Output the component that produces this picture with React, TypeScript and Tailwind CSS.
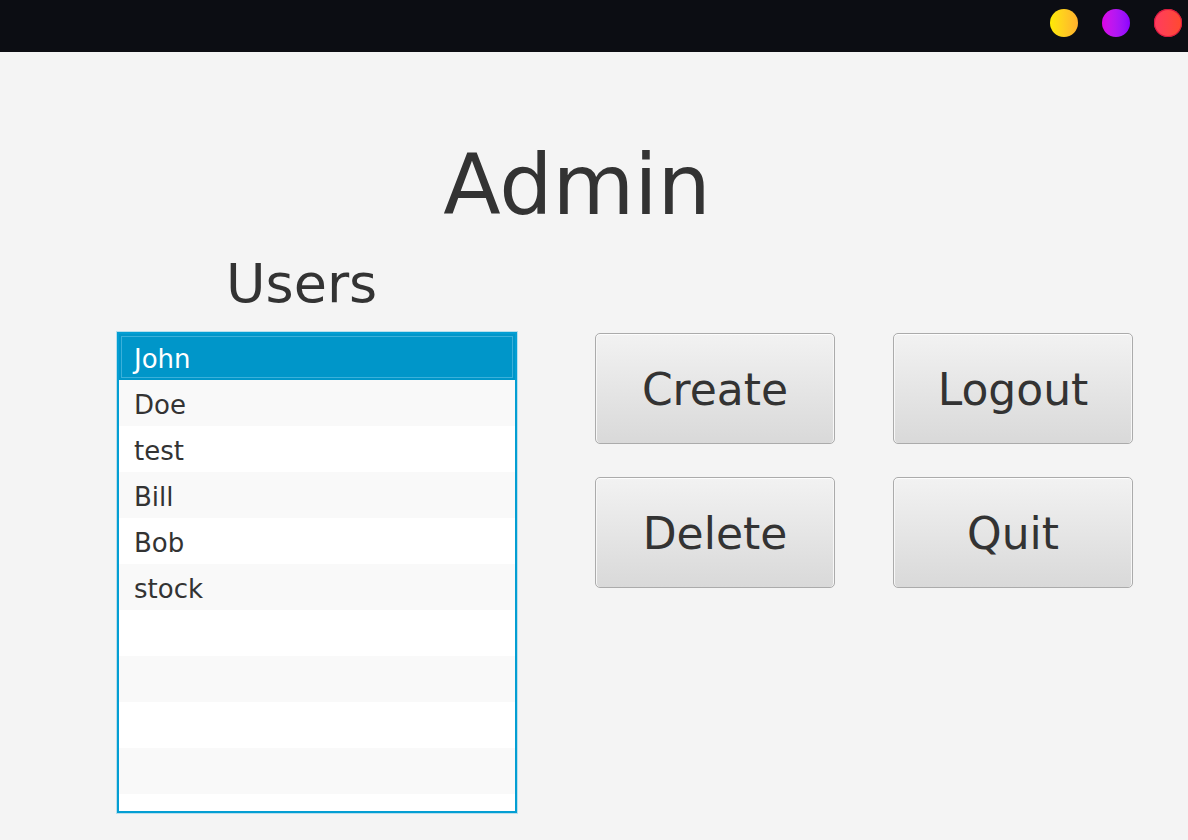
const users = ["John", "Doe", "test", "Bill", "Bob", "stock", "", "", "", ""];

function Dot({ className }: { className: string }) {
  return <span className={`block w-[28px] h-[28px] rounded-full ${className}`} />;
}

function ActionButton({ label }: { label: string }) {
  return (
    <button className="w-[240px] h-[111px] pt-[3px] rounded-[5px] border border-[#ababab] bg-linear-to-b from-[#f2f2f2] to-[#d9d9d9] shadow-[inset_0_1px_0_#fdfdfd,inset_1px_0_0_#f7f7f7,inset_-1px_0_0_#f7f7f7] text-[44px] leading-none text-[#333333] flex items-center justify-center">
      {label}
    </button>
  );
}

export default function App() {
  return (
    <div
      className="w-[1188px] h-[840px] bg-[#f4f4f4] flex flex-col text-[#333333]"
      style={{ fontFamily: '"DejaVu Sans", "Liberation Sans", sans-serif' }}
    >
      {/* title bar */}
      <div className="h-[52px] bg-[#0c0d13] flex justify-end items-start pt-[9px] pr-[6px] gap-[24px]">
        <Dot className="bg-linear-to-r from-[#ffea00] to-[#ffb02c]" />
        <Dot className="bg-linear-to-r from-[#dc00e6] to-[#8c00ff]" />
        <Dot className="bg-linear-to-r from-[#ff3b5e] to-[#ff4a2c] shadow-[inset_0_0_0_1px_#d81840]" />
      </div>

      <h1 className="pt-[91px] pr-[34px] text-center text-[84px] leading-none font-normal">Admin</h1>

      <div className="mt-[30px] pl-[226px] text-[54px] leading-none">Users</div>

      <div className="mt-[21px] flex items-start">
        <div className="ml-[117px] w-[400px] h-[481px] border-2 border-[#039ed3] bg-white shadow-[0_0_0_1px_rgba(3,158,211,0.25)] flex flex-col overflow-hidden">
          {users.map((name, i) => (
            <div
              key={i}
              className={
                i === 0
                  ? "h-[46px] shrink-0 bg-[#0096c9] text-white text-[26px] leading-[46px] pt-[2px] pl-[15px] shadow-[inset_0_0_0_2px_#0096c9,inset_0_0_0_3px_#3ab0da]"
                  : i % 2 === 1
                  ? "h-[46px] shrink-0 bg-[#f9f9f9] text-[26px] leading-[46px] pt-[2px] pl-[15px]"
                  : "h-[46px] shrink-0 bg-white text-[26px] leading-[46px] pt-[2px] pl-[15px]"
              }
            >
              {name}
            </div>
          ))}
        </div>

        <div className="ml-[78px] mt-[1px] grid grid-cols-2 gap-x-[58px] gap-y-[33px]">
          <ActionButton label="Create" />
          <ActionButton label="Logout" />
          <ActionButton label="Delete" />
          <ActionButton label="Quit" />
        </div>
      </div>
    </div>
  );
}
